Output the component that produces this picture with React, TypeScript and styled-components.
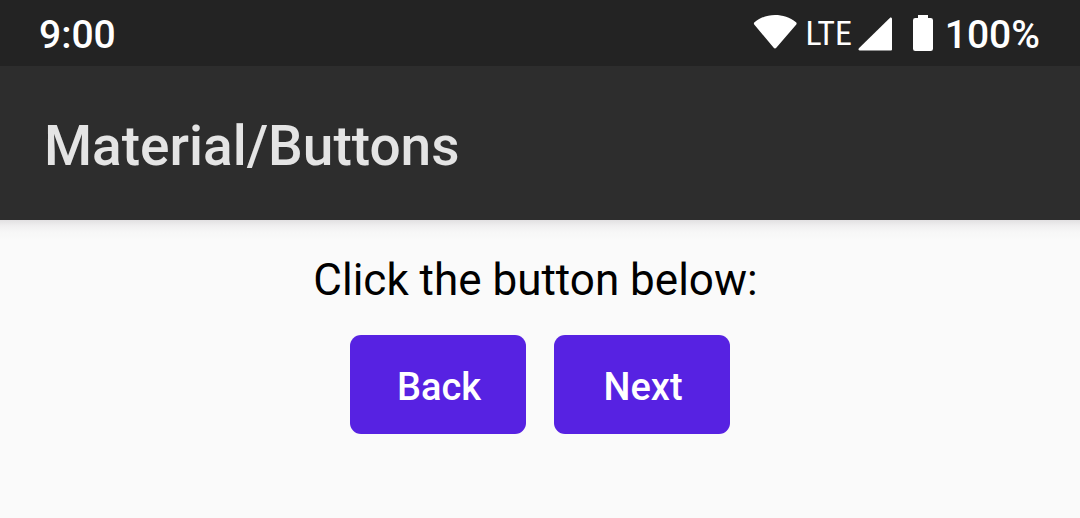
import React from "react";
import styled, { createGlobalStyle } from "styled-components";

const GlobalStyle = createGlobalStyle`
  * { box-sizing: border-box; }
  body {
    margin: 0;
    background: #fafafa;
    font-family: Roboto, sans-serif;
  }
`;

const StatusBar = styled.div`
  display: flex;
  align-items: center;
  justify-content: space-between;
  height: 66px;
  padding: 0 40px 0 39px;
  background: #232323;
  color: #ffffff;
  font-size: 39px;
  line-height: 48px;
  font-weight: 500;
`;

const StatusText = styled.span`
  padding-top: 4px;
`;

const StatusGroup = styled.div`
  display: flex;
  align-items: center;
`;

const NetworkLabel = styled.span`
  margin: 0 6px 0 9px;
  font-family: "Roboto Condensed", "Liberation Sans Narrow", Roboto, sans-serif;
  font-size: 34px;
  line-height: 40px;
  font-weight: 400;
`;

const StatusIcon = styled.svg<{ $gap?: number }>`
  display: block;
  flex: none;
  margin-right: ${({ $gap = 0 }) => $gap}px;
  fill: #ffffff;
`;

const AppBar = styled.header`
  display: flex;
  align-items: center;
  height: 154px;
  padding: 6px 44px 0;
  background: #2d2d2d;
`;

const Title = styled.h1`
  margin: 0;
  color: #e4e4e4;
  font-size: 55px;
  line-height: 64px;
  font-weight: 500;
`;

const Content = styled.main`
  display: flex;
  flex-direction: column;
  align-items: center;
  gap: 29px;
  padding: 34px 16px;
  background: linear-gradient(#e2e0e2, #f0eff0 6px, #f7f7f7 12px, #fafafa 20px);
`;

const Prompt = styled.p`
  margin: 0;
  padding-right: 9px;
  color: #000000;
  font-size: 44px;
  line-height: 52px;
`;

const ButtonRow = styled.div`
  display: flex;
  gap: 28px;
`;

const Button = styled.button`
  width: 176px;
  height: 99px;
  padding: 4px 0 0 2px;
  border: 0;
  border-radius: 11px;
  background: #5722e2;
  color: #ffffff;
  font-family: inherit;
  font-size: 38px;
  line-height: 48px;
  font-weight: 500;
  cursor: pointer;
`;

export default function App() {
  return (
    <>
      <GlobalStyle />
      <StatusBar>
        <StatusText>9:00</StatusText>
        <StatusGroup>
          <StatusIcon width="44" height="36" viewBox="0 0 44 36" aria-label="Wi-Fi">
            <path d="M1.500 7.200C7.500 2.400 14.500 0 22 0s15 2.400 21 7.200c.7.6.8 1.500.3 2.200L23.300 32.800c-.7.9-1.900.9-2.600 0L1.200 9.400c-.5-.7-.4-1.600.3-2.200z" />
          </StatusIcon>
          <NetworkLabel>LTE</NetworkLabel>
          <StatusIcon $gap={20} width="34" height="36" viewBox="0 -2 34 36" aria-label="Signal">
            <path d="M34 2v30.500a1 1 0 0 1-1 1H1.800c-1.300 0-1.800-1.300-.9-2.200L31.800.9c.9-.8 2.200-.3 2.200 1.100z" />
          </StatusIcon>
          <StatusIcon $gap={11} width="22" height="36" viewBox="0 0 22 36" aria-label="Battery">
            <path d="M6 0h10v3h2.700A2.300 2.300 0 0 1 21 5.300v28.400a2.300 2.300 0 0 1-2.300 2.300H3.300A2.300 2.300 0 0 1 1 33.700V5.300A2.300 2.300 0 0 1 3.300 3H6z" />
          </StatusIcon>
          <StatusText>100%</StatusText>
        </StatusGroup>
      </StatusBar>
      <AppBar>
        <Title>Material/Buttons</Title>
      </AppBar>
      <Content>
        <Prompt>Click the button below:</Prompt>
        <ButtonRow>
          <Button type="button">Back</Button>
          <Button type="button">Next</Button>
        </ButtonRow>
      </Content>
    </>
  );
}
